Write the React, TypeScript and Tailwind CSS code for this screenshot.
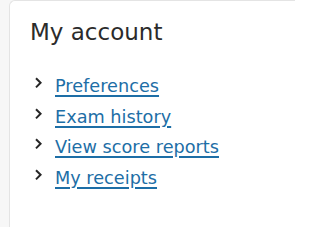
const LINKS = ["Preferences", "Exam history", "View score reports", "My receipts"];

function Chevron() {
  return (
    <svg width="7" height="12" viewBox="0 0 7 12" className="mt-[6px] mr-[13px] shrink-0" aria-hidden="true">
      <path d="M1 1.2l4.6 4.6L1 10.4" fill="none" stroke="#262626" strokeWidth="2" />
    </svg>
  );
}

export default function App() {
  return (
    <div className="h-[227px] w-[295px] overflow-hidden bg-[#f7f7f7] pl-[9px] font-['DejaVu_Sans',sans-serif]">
      <div className="h-full rounded-tl-md border-l border-t border-[#e4e4e4] bg-white pl-[20px] pt-[17px]">
        <h2 className="text-[23px] leading-[28px] text-[#2b2b2b]">My account</h2>
        <ul className="mt-[25px] pl-[5px]">
          {LINKS.map((label) => (
            <li key={label} className="flex items-start">
              <Chevron />
              <a
                href="#"
                className="text-[17.7px] leading-[30.5px] text-[#1d6ea6] underline decoration-2 underline-offset-[3px]"
              >
                {label}
              </a>
            </li>
          ))}
        </ul>
      </div>
    </div>
  );
}
